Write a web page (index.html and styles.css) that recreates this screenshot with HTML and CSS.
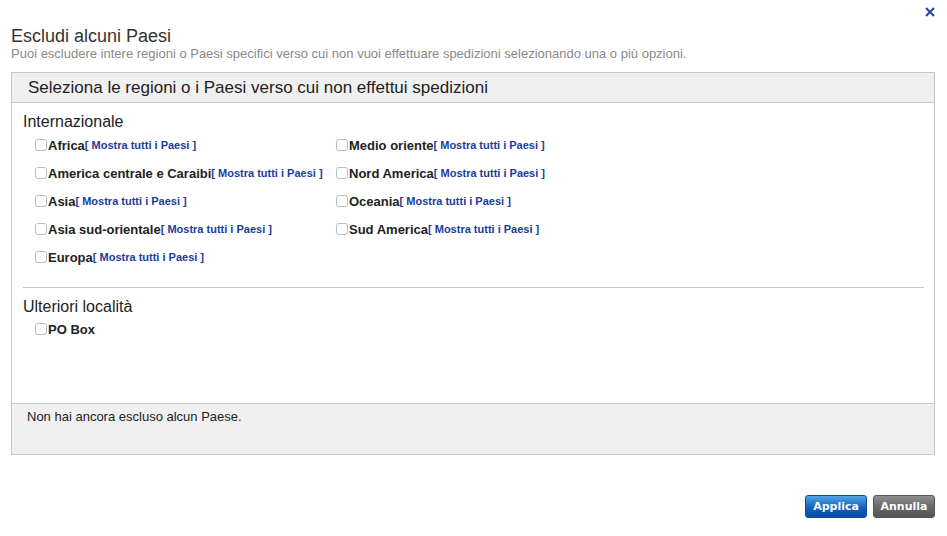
FILE: index.html
```
<!DOCTYPE html>
<html lang="it">
<head>
    <meta charset="UTF-8">
    <meta name="viewport" content="width=device-width, initial-scale=1.0">
    <title>Escludi alcuni Paesi</title>
    <link rel="stylesheet" href="styles.css">
</head>
<body>
<div class="dialog">
    <a class="close" href="#" title="Chiudi">
        <svg width="10" height="10" viewBox="0 0 10 10"><path d="M1 1 L9 9 M9 1 L1 9" stroke="#1a47a8" stroke-width="2" fill="none"/></svg>
    </a>
    <h1 class="title">Escludi alcuni Paesi</h1>
    <p class="subtitle">Puoi escludere intere regioni o Paesi specifici verso cui non vuoi effettuare spedizioni selezionando una o più opzioni.</p>

    <div class="box">
        <div class="box-head">Seleziona le regioni o i Paesi verso cui non effettui spedizioni</div>
        <div class="box-body">
            <div class="group-title">Internazionale</div>
            <div class="regions">
                <div class="col">
                    <label class="region"><input type="checkbox">Africa<a href="#">[ Mostra tutti i Paesi ]</a></label>
                    <label class="region"><input type="checkbox">America centrale e Caraibi<a href="#">[ Mostra tutti i Paesi ]</a></label>
                    <label class="region"><input type="checkbox">Asia<a href="#">[ Mostra tutti i Paesi ]</a></label>
                    <label class="region"><input type="checkbox">Asia sud-orientale<a href="#">[ Mostra tutti i Paesi ]</a></label>
                    <label class="region"><input type="checkbox">Europa<a href="#">[ Mostra tutti i Paesi ]</a></label>
                </div>
                <div class="col">
                    <label class="region"><input type="checkbox">Medio oriente<a href="#">[ Mostra tutti i Paesi ]</a></label>
                    <label class="region"><input type="checkbox">Nord America<a href="#">[ Mostra tutti i Paesi ]</a></label>
                    <label class="region"><input type="checkbox">Oceania<a href="#">[ Mostra tutti i Paesi ]</a></label>
                    <label class="region"><input type="checkbox">Sud America<a href="#">[ Mostra tutti i Paesi ]</a></label>
                </div>
            </div>
            <hr class="sep">
            <div class="group-title">Ulteriori località</div>
            <label class="region small"><input type="checkbox">PO Box</label>
        </div>
        <div class="box-foot">Non hai ancora escluso alcun Paese.</div>
    </div>

    <div class="actions">
        <button class="btn btn-apply" type="button">Applica</button>
        <button class="btn btn-cancel" type="button">Annulla</button>
    </div>
</div>
</body>
</html>
```

FILE: styles.css
```
body {
    margin: 0;
    font-family: "Liberation Sans", Arial, sans-serif;
    background: #fff;
    color: #333;
}
.dialog {
    position: relative;
    padding: 26px 12px 0 11px;
}
.close {
    position: absolute;
    top: 7px;
    right: 12px;
    line-height: 0;
}
.title {
    margin: 0;
    font-size: 18px;
    font-weight: normal;
    line-height: 20px;
    color: #333;
}
.subtitle {
    margin: 0;
    font-size: 13px;
    line-height: 15px;
    color: #888;
}
.box {
    margin-top: 11px;
    border: 1px solid #c8c8c8;
}
.box-head {
    height: 29px;
    line-height: 30px;
    padding-left: 16px;
    background: #f0f0f0;
    border-bottom: 1px solid #c8c8c8;
    font-size: 17px;
    color: #222;
}
.box-body {
    box-sizing: border-box;
    height: 300px;
    padding: 10px 10px 0 11px;
}
.group-title {
    font-size: 16px;
    line-height: 18px;
    color: #222;
}
.regions {
    display: flex;
}
.col {
    display: flex;
    flex-direction: column;
}
.col:first-child {
    width: 301px;
    padding-left: 12px;
}
.region {
    display: flex;
    align-items: center;
    height: 28px;
    font-size: 13px;
    font-weight: bold;
    color: #222;
}
.region.small {
    height: 26px;
    padding-left: 12px;
}
.region input {
    appearance: none;
    -webkit-appearance: none;
    width: 12px;
    height: 12px;
    margin: 0 1px 0 0;
    border: 1px solid #bdbdbd;
    border-radius: 3px;
    background: #fff;
}
.region a {
    font-size: 11px;
    color: #1a3c9c;
    text-decoration: none;
}
.sep {
    margin: 16px 0 10px;
    border: 0;
    border-top: 1px solid #c8c8c8;
}
.box-foot {
    box-sizing: border-box;
    height: 51px;
    padding: 5px 0 0 15px;
    background: #f0f0f0;
    border-top: 1px solid #c8c8c8;
    font-size: 13px;
    color: #222;
}
.actions {
    display: flex;
    justify-content: flex-end;
    gap: 6px;
    margin-top: 40px;
}
.btn {
    width: 62px;
    height: 23px;
    padding: 0;
    border: 0;
    border-radius: 3px;
    font-family: "DejaVu Sans", Verdana, sans-serif;
    font-size: 11px;
    font-weight: bold;
    color: #fff;
    cursor: pointer;
}
.btn-apply {
    background: linear-gradient(#52a6e4, #1262c0 55%, #0a4aa6);
    border: 1px solid #0b4a9c;
}
.btn-cancel {
    background: linear-gradient(#8e8e8e, #666 55%, #545454);
    border: 1px solid #555;
}
```
